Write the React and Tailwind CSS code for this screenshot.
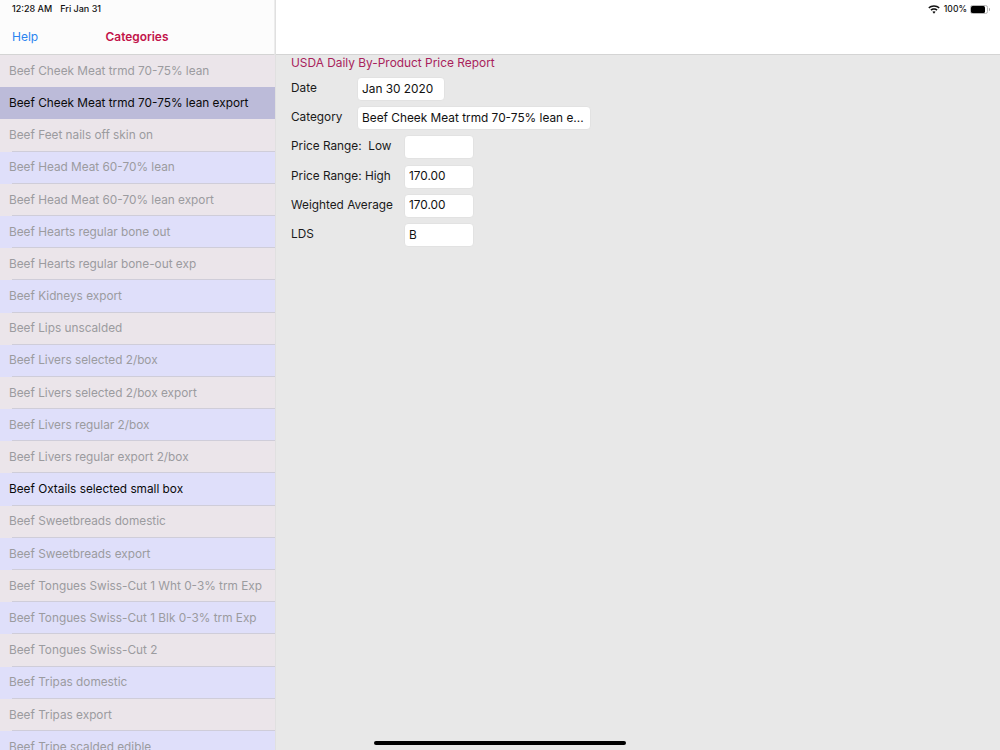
const items = [
  "Beef Cheek Meat trmd 70-75% lean",
  "Beef Cheek Meat trmd 70-75% lean export",
  "Beef Feet nails off skin on",
  "Beef Head Meat 60-70% lean",
  "Beef Head Meat 60-70% lean export",
  "Beef Hearts regular bone out",
  "Beef Hearts regular bone-out exp",
  "Beef Kidneys export",
  "Beef Lips unscalded",
  "Beef Livers selected 2/box",
  "Beef Livers selected 2/box export",
  "Beef Livers regular 2/box",
  "Beef Livers regular export 2/box",
  "Beef Oxtails selected small box",
  "Beef Sweetbreads domestic",
  "Beef Sweetbreads export",
  "Beef Tongues Swiss-Cut 1 Wht 0-3% trm Exp",
  "Beef Tongues Swiss-Cut 1 Blk 0-3% trm Exp",
  "Beef Tongues Swiss-Cut 2",
  "Beef Tripas domestic",
  "Beef Tripas export",
  "Beef Tripe scalded edible",
];

function Row({ text, index }) {
  const selected = index === 1;
  const dark = index === 13;
  const bg = selected ? "bg-[#bcbbd9]" : index % 2 === 0 ? "bg-[#ebe5ea]" : "bg-[#dfdffa]";
  const color = selected || dark ? "text-[#0a0a0a]" : "text-[#9b9b9f]";
  return (
    <div className={`relative h-[32.19px] shrink-0 flex items-center pl-[9px] pt-px text-[11.8px] ${bg} ${color}`}>
      <span className="whitespace-nowrap">{text}</span>
      {index < items.length - 1 && !selected && index !== 0 && (
        <div className="absolute left-3 right-0 bottom-0 h-px bg-[#cfcdd9]" />
      )}
    </div>
  );
}

function Field({ label, value, wide, labelWidth }) {
  return (
    <div className="flex h-6 mb-[5.2px] items-start">
      <div className={`text-[11.8px] leading-5 pt-px text-[#1a1a1a] whitespace-pre ${labelWidth}`}>{label}</div>
      <div className={`h-6 ${wide} bg-white rounded-[4px] border border-[#e2e2e2] px-[4px] pt-px flex items-center text-[11.85px] text-[#111] whitespace-nowrap overflow-hidden`}>
        {value}
      </div>
    </div>
  );
}

function Wifi() {
  return (
    <svg width="12" height="9" viewBox="0 0 12 9" fill="#111">
      <path d="M6 0.2C8.2 0.2 10.2 1 11.7 2.4L10.6 3.6C9.4 2.5 7.8 1.8 6 1.8S2.6 2.5 1.4 3.6L0.3 2.4C1.8 1 3.8 0.2 6 0.2Z" />
      <path d="M6 3.2C7.4 3.2 8.6 3.7 9.6 4.6L8.5 5.8C7.8 5.2 7 4.8 6 4.8S4.2 5.2 3.5 5.8L2.4 4.6C3.4 3.7 4.6 3.2 6 3.2Z" />
      <path d="M6 6.2C6.7 6.2 7.2 6.4 7.6 6.8L6 8.7L4.4 6.8C4.8 6.4 5.3 6.2 6 6.2Z" />
    </svg>
  );
}

function Battery() {
  return (
    <div className="flex items-center">
      <div className="w-[18px] h-[9px] rounded-[2.5px] border border-[#b8b8b8] pr-[2px]">
        <div className="w-full h-full rounded-[1.5px] bg-black" />
      </div>
      <div className="w-[1px] h-[3px] bg-[#a8a8a8] ml-px rounded-r" />
    </div>
  );
}

export default function App() {
  return (
    <div className="relative flex w-[1000px] h-[750px] overflow-hidden bg-[#e8e8e8] font-['Inter','Liberation_Sans',sans-serif]">
      <div className="w-[275px] shrink-0 h-full flex flex-col">
        <div className="h-[55px] shrink-0 bg-[#fcfcfc] border-b border-r border-b-[#d4d4d4] border-r-[#ececec] relative flex flex-col">
          <div className="h-[18px] pl-3 flex items-center gap-2 text-[9px] font-medium text-[#111]">
            <span>12:28 AM</span>
            <span>Fri Jan 31</span>
          </div>
          <div className="relative flex-1 flex items-center justify-center pt-px">
            <span className="absolute left-3 text-[12px] text-[#2b84f0]">Help</span>
            <span className="text-[11.9px] font-semibold text-[#c2134a]">Categories</span>
          </div>
        </div>
        <div className="flex-1 flex flex-col overflow-hidden">
          {items.map((t, i) => (
            <Row key={t} text={t} index={i} />
          ))}
        </div>
      </div>
      <div className="flex-1 h-full flex flex-col border-l border-[#e0e0e0]">
        <div className="h-[55px] shrink-0 bg-white border-b border-[#d4d4d4]">
          <div className="h-[18px] pr-[10px] flex items-center justify-end gap-[3px] text-[8.6px] font-medium text-[#111]">
            <div className="mr-[1px] flex"><Wifi /></div>
            <span>100%</span>
            <Battery />
          </div>
        </div>
        <div className="pl-[15px] flex-1">
          <div className="text-[11.9px] leading-[15px] text-[#a81f5c] mb-[7px]">USDA Daily By-Product Price Report</div>
          <Field label="Date" value="Jan 30 2020" wide="w-[88px]" labelWidth="w-[66px]" />
          <Field label="Category" value="Beef Cheek Meat trmd 70-75% lean e..." wide="w-[234px]" labelWidth="w-[66px]" />
          <Field label="Price Range:  Low" value="" wide="w-[70px]" labelWidth="w-[113px]" />
          <Field label="Price Range: High" value="170.00" wide="w-[70px]" labelWidth="w-[113px]" />
          <Field label="Weighted Average" value="170.00" wide="w-[70px]" labelWidth="w-[113px]" />
          <Field label="LDS" value="B" wide="w-[70px]" labelWidth="w-[113px]" />
        </div>
      </div>
      <div className="absolute left-[374px] bottom-[5px] w-[252px] h-[4px] rounded-full bg-black" />
    </div>
  );
}
